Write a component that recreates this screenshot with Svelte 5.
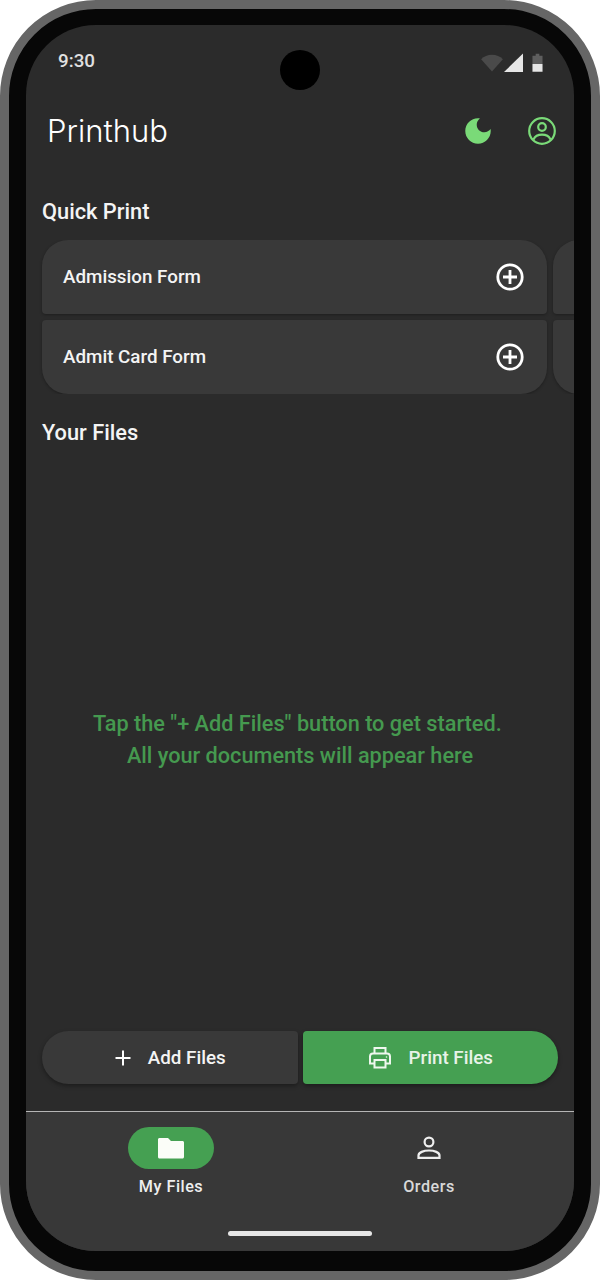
<script>
  const forms = [
    ["Admission Form", "Admit Card Form"],
    ["Marksheet Form", "Other Form"]
  ];
</script>

<div class="device">
  <div class="screen">
    <div class="camera"></div>

    <div class="status">
      <span class="time">9:30</span>
      <div class="status-icons">
        <svg width="22" height="18" viewBox="0 0 23 19"><path d="M0 5.500C3 2.500 7 .8 11.500 .8S20 2.500 23 5.500L11.500 18.500Z" fill="#4a4a4a"/></svg>
        <svg width="20" height="19" viewBox="0 0 20 19"><path d="M19 .5V19H0Z" fill="#e6e6e6"/></svg>
        <svg class="battery" width="11" height="20" viewBox="0 0 12 20"><path d="M4 0H8V2H11.500V11H.5V2H4Z" fill="#5e5e5e"/><path d="M.5 11H11.500V19.500H.5Z" fill="#e6e6e6"/></svg>
      </div>
    </div>

    <header>
      <h1>Printhub</h1>
      <div class="actions">
        <svg width="30" height="30" viewBox="1.400 1.400 21.200 21.200"><path d="M12 3c-4.970 0-9 4.030-9 9s4.030 9 9 9 9-4.030 9-9c0-.46-.04-.92-.1-1.360-.98 1.370-2.580 2.260-4.400 2.260-2.980 0-5.400-2.420-5.400-5.400 0-1.810.89-3.420 2.260-4.400-.44-.06-.9-.1-1.360-.1z" fill="#7ada78"/></svg>
        <svg width="30" height="30" viewBox="0 0 30 30" fill="none" stroke="#7ada78" stroke-width="2.200"><circle cx="15" cy="15" r="12.800"/><circle cx="15" cy="11" r="3.800"/><path d="M6.500 23.500C8 20.200 11 18.700 15 18.700S22 20.200 23.500 23.500"/></svg>
      </div>
    </header>

    <h2 class="quick-title">Quick Print</h2>
    <div class="quick">
      {#each forms as col}
        <div class="column">
          {#each col as name}
            <div class="form-card">
              <span>{name}</span>
              <svg width="30" height="30" viewBox="0 0 30 30" fill="none" stroke="#fff" stroke-width="2.800"><circle cx="15" cy="15" r="12.200"/><path d="M15 8V22M8 15H22"/></svg>
            </div>
          {/each}
        </div>
      {/each}
    </div>

    <h2 class="files-title">Your Files</h2>

    <div class="empty">
      <p>Tap the "+ Add Files" button to get started.&nbsp;</p>
      <p>All your documents will appear here</p>
    </div>

    <div class="buttons">
      <button class="add">
        <svg width="18" height="18" viewBox="0 0 18 18" stroke="#fff" stroke-width="2"><path d="M9 1.500V16.500M1.500 9H16.500"/></svg>
        Add Files
      </button>
      <button class="print">
        <svg width="24" height="24" viewBox="0 0 24 24" fill="none" stroke="#eef7ee" stroke-width="2"><path d="M6.500 7V2H17.500V7"/><path d="M6 17.500H2V10.500C2 8.500 3 7.500 5 7.500H19C21 7.500 22 8.500 22 10.500V17.500H18"/><path d="M6.500 14H17.500V21.500H6.500Z"/><circle cx="18.500" cy="11" r=".8" fill="#eef7ee" stroke="none"/></svg>
        Print Files
      </button>
    </div>

    <nav>
      <div class="tabs">
        <div class="tab active">
          <div class="pill">
            <svg width="28" height="24" viewBox="0 0 28 24"><path d="M2.500 2H11L14 5H25.500C26.300 5 27 5.700 27 6.500V21C27 21.800 26.300 22.500 25.500 22.500H2.500C1.700 22.500 1 21.800 1 21V3.500C1 2.700 1.700 2 2.500 2Z" fill="#fbfdf8"/></svg>
          </div>
          <span>My Files</span>
        </div>
        <div class="tab">
          <div class="pill">
            <svg width="26" height="26" viewBox="0 0 26 26" fill="none" stroke="#eee" stroke-width="2.200"><circle cx="13" cy="7" r="4.400"/><path d="M2.500 22.800V20.500C2.500 17.500 7.500 15.500 13 15.500S23.500 17.500 23.500 20.500V22.800Z"/></svg>
          </div>
          <span>Orders</span>
        </div>
      </div>
      <div class="home"></div>
    </nav>
  </div>
</div>

<style>
  :global(body) {
    margin: 0;
    background: #fff;
  }

  .device {
    box-sizing: border-box;
    width: 600px;
    height: 1280px;
    padding: 16px 17px 20px;
    border: 9px solid #666;
    border-radius: 96px;
    background: #070707;
  }

  .screen {
    position: relative;
    display: flex;
    flex-direction: column;
    height: 100%;
    overflow: hidden;
    border-radius: 70px;
    background: #2b2b2b;
    color: #f4f4f4;
    font-family: Roboto, sans-serif;
  }

  .camera {
    position: absolute;
    top: 25px;
    left: 254px;
    width: 40px;
    height: 40px;
    border-radius: 50%;
    background: #000;
  }

  .status {
    display: flex;
    justify-content: space-between;
    align-items: center;
    height: 24px;
    margin-top: 24px;
    padding: 0 31px 0 32px;
  }

  .time {
    font-size: 18.800px;
    font-weight: 500;
    color: #e0e0e0;
  }

  .status-icons {
    display: flex;
    align-items: center;
    gap: 1px;
    margin-top: 3px;
  }

  .battery {
    margin-left: 7px;
  }

  header {
    display: flex;
    justify-content: space-between;
    align-items: center;
    margin-top: 38px;
    padding: 0 17px 0 21px;
  }

  h1 {
    margin: 0;
    font-family: Inter, sans-serif;
    font-size: 31px;
    font-weight: 300;
    line-height: 40px;
    color: #fff;
  }

  .actions {
    display: flex;
    gap: 34px;
  }

  h2 {
    margin: 0;
    padding-left: 16px;
    font-size: 21.800px;
    font-weight: 500;
    line-height: 28px;
  }

  .quick-title {
    margin-top: 47px;
  }

  .quick {
    display: flex;
    gap: 6px;
    margin-top: 14px;
    padding-left: 16px;
    overflow: hidden;
  }

  .column {
    display: flex;
    flex-direction: column;
    flex: 0 0 505px;
    gap: 6px;
  }

  .form-card {
    display: flex;
    justify-content: space-between;
    align-items: center;
    box-sizing: border-box;
    height: 74px;
    padding: 0 22px 0 21px;
    border-radius: 26px 26px 4px 4px;
    background: #393939;
    box-shadow: 0 1px 3px rgba(0, 0, 0, 0.3);
    font-size: 18.800px;
    font-weight: 500;
  }

  .form-card:last-child {
    border-radius: 4px 4px 26px 26px;
  }

  .column:last-child span {
    visibility: hidden;
  }

  .files-title {
    margin-top: 25px;
  }

  .empty {
    flex: 1;
    display: flex;
    flex-direction: column;
    justify-content: center;
    padding-top: 2px;
    color: #45994f;
    font-size: 21.700px;
    font-weight: 500;
    line-height: 32px;
    text-align: center;
  }

  .empty p {
    margin: 0;
  }

  .buttons {
    display: flex;
    gap: 5px;
    padding: 0 16px;
  }

  button {
    flex: 1;
    display: flex;
    justify-content: center;
    align-items: center;
    gap: 16px;
    height: 53px;
    padding: 0;
    border: 0;
    color: #f4f4f4;
    font-family: Roboto, sans-serif;
    font-size: 18.800px;
    font-weight: 500;
    box-shadow: 0 2px 4px rgba(0, 0, 0, 0.35);
  }

  .add {
    border-radius: 27px 4px 4px 27px;
    background: #393939;
  }

  .print {
    gap: 17px;
    border-radius: 4px 27px 27px 4px;
    background: #45a052;
    color: #e8f3e8;
  }

  nav {
    display: flex;
    flex-direction: column;
    height: 139px;
    margin-top: 27px;
    border-top: 1px solid #b5b5b5;
    background: #383838;
  }

  .tabs {
    display: flex;
    padding: 15px 16px 0;
  }

  .tab {
    flex: 1;
    display: flex;
    flex-direction: column;
    align-items: center;
    gap: 8px;
    font-size: 16.200px;
    font-weight: 500;
    letter-spacing: 0.5px;
    color: #d8d8d8;
  }

  .tab.active {
    color: #eeeeee;
  }

  .pill {
    display: flex;
    justify-content: center;
    align-items: center;
    width: 86px;
    height: 42px;
    border-radius: 21px;
  }

  .active .pill {
    background: #45a052;
  }

  .home {
    width: 144px;
    height: 5px;
    margin: 35px auto 0;
    border-radius: 3px;
    background: #e6e6e6;
  }
</style>
